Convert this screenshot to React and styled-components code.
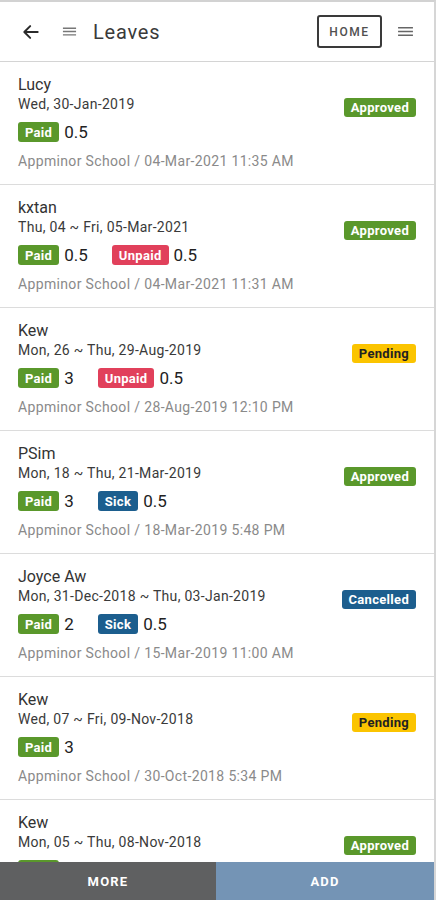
import React from 'react';
import styled, { createGlobalStyle } from 'styled-components';

const GlobalStyle = createGlobalStyle`
  html, body {
    margin: 0;
    padding: 0;
    background: #ffffff;
    font-family: Roboto, "Noto Sans", Arial, sans-serif;
  }
`;

const Screen = styled.div`
  width: 436px;
  height: 900px;
  box-sizing: border-box;
  border-top: 2px solid #d2d2d2;
  border-right: 2px solid #d6d6d6;
  display: flex;
  flex-direction: column;
  overflow: hidden;
  background: #fff;
`;

const Header = styled.header`
  height: 59px;
  flex-shrink: 0;
  display: flex;
  align-items: center;
  padding: 0 20px 0 20px;
  border-bottom: 1px solid #d4d4d4;
`;

const IconBtn = styled.div`
  display: flex;
  align-items: center;
  justify-content: center;
  width: ${(p) => p.w || 24}px;
  margin-right: ${(p) => p.mr || 0}px;
`;

const Title = styled.h1`
  margin: 0;
  flex: 1;
  font-size: 20px;
  font-weight: 400;
  color: #3a3a3a;
  letter-spacing: 0.8px;
`;

const HomeButton = styled.div`
  width: 61px;
  height: 29px;
  border: 2px solid #3a3a3a;
  border-radius: 3px;
  display: flex;
  align-items: center;
  justify-content: center;
  font-size: 12px;
  letter-spacing: 1.6px;
  color: #505050;
  font-weight: 500;
  margin-right: 14px;
`;

const List = styled.div`
  flex: 1;
  overflow: hidden;
`;

const Card = styled.div`
  display: flex;
  align-items: flex-start;
  padding: 12px 18px 13px 18px;
  border-bottom: 1px solid #dcdcdc;
`;

const Main = styled.div`
  flex: 1;
  display: flex;
  flex-direction: column;
`;

const Name = styled.div`
  font-size: 16px;
  line-height: 21px;
  color: #333;
`;

const Dates = styled.div`
  font-size: 14px;
  line-height: 19px;
  letter-spacing: 0.3px;
  color: #3a3a3a;
`;

const Counts = styled.div`
  display: flex;
  align-items: center;
  margin-top: 8px;
  height: 20px;
`;

const Entry = styled.div`
  display: flex;
  align-items: center;
  margin-right: 24px;
`;

const Amount = styled.span`
  font-size: 17px;
  color: #222;
  margin-left: 5px;
`;

const COLORS = {
  green: { bg: '#5a982b', fg: '#fff' },
  red: { bg: '#e1405b', fg: '#fff' },
  blue: { bg: '#1c5e8e', fg: '#fff' },
  yellow: { bg: '#fbc400', fg: '#222' },
};

const Badge = styled.span`
  display: inline-flex;
  align-items: center;
  height: ${(p) => (p.tall ? 20 : 19)}px;
  padding: 0 7px;
  border-radius: 3px;
  font-size: 13px;
  font-weight: 700;
  letter-spacing: 0.3px;
  background: ${(p) => COLORS[p.tone].bg};
  color: ${(p) => COLORS[p.tone].fg};
`;

const StatusWrap = styled.div`
  margin-top: 23px;
`;

const Footer = styled.div`
  font-size: 14px;
  line-height: 19px;
  letter-spacing: 0.35px;
  color: #8a8a8a;
  margin-top: 10px;
`;

const BottomBar = styled.div`
  height: 38px;
  flex-shrink: 0;
  display: grid;
  grid-template-columns: 216px 1fr;
`;

const BarButton = styled.div`
  display: flex;
  align-items: center;
  justify-content: center;
  background: ${(p) => (p.primary ? '#7494b5' : '#5f6061')};
  color: #fff;
  font-size: 13px;
  font-weight: 700;
  letter-spacing: 1.2px;
`;

const Menu = ({ size = 16, color = '#555' }) => (
  <svg width={size} height={size} viewBox="0 0 16 16">
    <path d="M1 4.5h14M1 8h14M1 11.5h14" stroke={color} strokeWidth="1.4" />
  </svg>
);

const Back = () => (
  <svg width="20" height="20" viewBox="0 0 24 24">
    <path d="M20 12H5M11 5l-7 7 7 7" fill="none" stroke="#2a2a2a" strokeWidth="2.4" strokeLinecap="round" strokeLinejoin="round" />
  </svg>
);

const leaves = [
  { name: 'Lucy', dates: 'Wed, 30-Jan-2019', status: 'Approved', items: [['Paid', '0.5']], foot: 'Appminor School / 04-Mar-2021 11:35 AM' },
  { name: 'kxtan', dates: 'Thu, 04 ~ Fri, 05-Mar-2021', status: 'Approved', items: [['Paid', '0.5'], ['Unpaid', '0.5']], foot: 'Appminor School / 04-Mar-2021 11:31 AM' },
  { name: 'Kew', dates: 'Mon, 26 ~ Thu, 29-Aug-2019', status: 'Pending', items: [['Paid', '3'], ['Unpaid', '0.5']], foot: 'Appminor School / 28-Aug-2019 12:10 PM' },
  { name: 'PSim', dates: 'Mon, 18 ~ Thu, 21-Mar-2019', status: 'Approved', items: [['Paid', '3'], ['Sick', '0.5']], foot: 'Appminor School / 18-Mar-2019 5:48 PM' },
  { name: 'Joyce Aw', dates: 'Mon, 31-Dec-2018 ~ Thu, 03-Jan-2019', status: 'Cancelled', items: [['Paid', '2'], ['Sick', '0.5']], foot: 'Appminor School / 15-Mar-2019 11:00 AM' },
  { name: 'Kew', dates: 'Wed, 07 ~ Fri, 09-Nov-2018', status: 'Pending', items: [['Paid', '3']], foot: 'Appminor School / 30-Oct-2018 5:34 PM' },
  { name: 'Kew', dates: 'Mon, 05 ~ Thu, 08-Nov-2018', status: 'Approved', items: [['Paid', '4']], foot: 'Appminor School / 29-Oct-2018 9:12 AM' },
];

const toneOf = {
  Paid: 'green',
  Unpaid: 'red',
  Sick: 'blue',
  Approved: 'green',
  Pending: 'yellow',
  Cancelled: 'blue',
};

const App = () => {
  return (
    <Screen>
      <GlobalStyle />
      <Header>
        <IconBtn w={22} mr={18}><Back /></IconBtn>
        <IconBtn w={18} mr={15}><Menu size={15} color="#777" /></IconBtn>
        <Title>Leaves</Title>
        <HomeButton>HOME</HomeButton>
        <IconBtn w={18}><Menu size={17} color="#666" /></IconBtn>
      </Header>
      <List>
        {leaves.map((l, i) => (
          <Card key={i}>
            <Main>
              <Name>{l.name}</Name>
              <Dates>{l.dates}</Dates>
              <Counts>
                {l.items.map(([type, n]) => (
                  <Entry key={type}>
                    <Badge tall tone={toneOf[type]}>{type}</Badge>
                    <Amount>{n}</Amount>
                  </Entry>
                ))}
              </Counts>
              <Footer>{l.foot}</Footer>
            </Main>
            <StatusWrap>
              <Badge tone={toneOf[l.status]}>{l.status}</Badge>
            </StatusWrap>
          </Card>
        ))}
      </List>
      <BottomBar>
        <BarButton>MORE</BarButton>
        <BarButton primary>ADD</BarButton>
      </BottomBar>
    </Screen>
  );
};

export default App;
